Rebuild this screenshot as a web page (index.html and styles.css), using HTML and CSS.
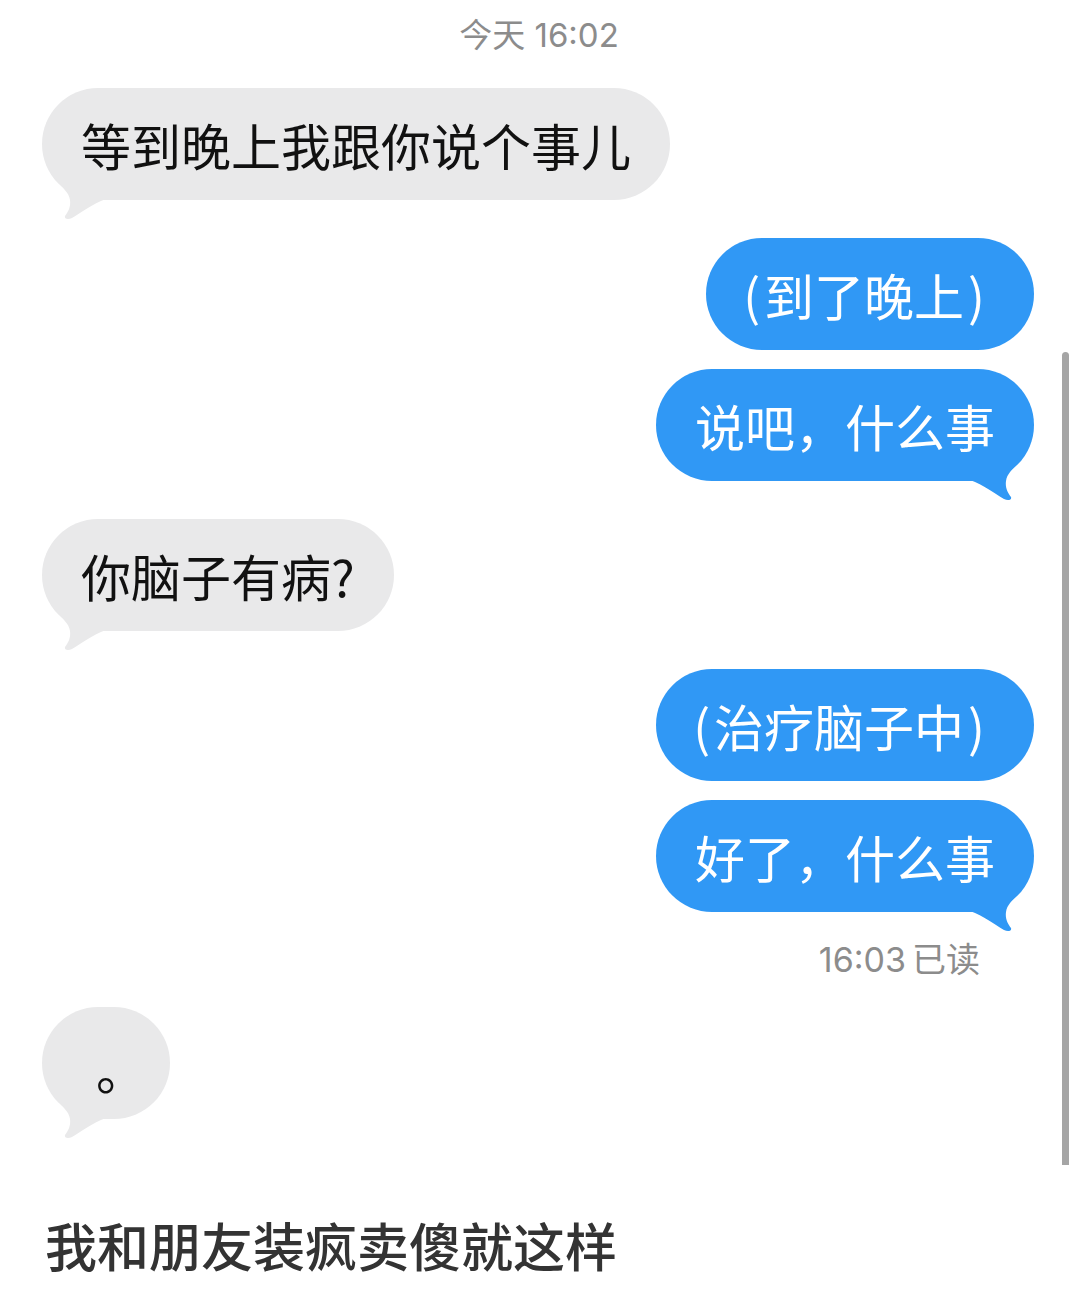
FILE: index.html
```html
<!DOCTYPE html>
<html lang="zh-CN">
<head>
    <meta charset="UTF-8">
    <meta name="viewport" content="width=device-width, initial-scale=1.0">
    <title>聊天记录</title>
    <link rel="stylesheet" href="styles.css">
</head>
<body>
    <div class="chat">
        <div class="time">今天 16:02</div>

        <div class="bubble them top">等到晚上我跟你说个事儿<svg class="tail" viewBox="0 0 70 60"><path d="M14 19 C20 28 27 32 28 40 C29 47 26 52 23 56 C22 59 26 60 30 58 C40 52 50 44 64 39 L64 19 Z"/></svg></div>

        <div class="bubble me first paren"><span class="p">(</span>到了晚上<span class="p">)</span></div>
        <div class="bubble me next">说吧，什么事<svg class="tail" viewBox="0 0 70 60"><path d="M14 19 C20 28 27 32 28 40 C29 47 26 52 23 56 C22 59 26 60 30 58 C40 52 50 44 64 39 L64 19 Z"/></svg></div>

        <div class="bubble them first">你脑子有病?<svg class="tail" viewBox="0 0 70 60"><path d="M14 19 C20 28 27 32 28 40 C29 47 26 52 23 56 C22 59 26 60 30 58 C40 52 50 44 64 39 L64 19 Z"/></svg></div>

        <div class="bubble me first paren"><span class="p">(</span>治疗脑子中<span class="p">)</span></div>
        <div class="bubble me next">好了，什么事<svg class="tail" viewBox="0 0 70 60"><path d="M14 19 C20 28 27 32 28 40 C29 47 26 52 23 56 C22 59 26 60 30 58 C40 52 50 44 64 39 L64 19 Z"/></svg></div>
        <div class="read">16:03<span class="read-label">已读</span></div>

        <div class="bubble them dot">。<svg class="tail" viewBox="0 0 70 60"><path d="M14 19 C20 28 27 32 28 40 C29 47 26 52 23 56 C22 59 26 60 30 58 C40 52 50 44 64 39 L64 19 Z"/></svg></div>
    </div>

    <p class="caption">我和朋友装疯卖傻就这样</p>

    <div class="scrollbar"></div>
</body>
</html>
```

FILE: styles.css
```css
body {
    margin: 0;
    background: #fff;
    font-family: "Noto Sans CJK SC", "Noto Sans", sans-serif;
    position: relative;
    min-height: 1289px;
}
.chat {
    display: flex;
    flex-direction: column;
    padding: 15px 45px 0 42px;
}
.time {
    align-self: center;
    font-family: Inter, "Noto Sans CJK SC", sans-serif;
    font-size: 33px;
    line-height: 40px;
    color: #8c8c8c;
    padding-left: 2px;
}
.bubble {
    position: relative;
    font-size: 50px;
    line-height: 50px;
    padding: 31px 39px;
    border-radius: 56px;
    white-space: nowrap;
}
.bubble.them {
    align-self: flex-start;
    background: #e9e9ea;
    color: #111;
}
.bubble.me {
    align-self: flex-end;
    background: #3098f5;
    color: #fff;
}
.bubble.top {
    margin-top: 33px;
}
.bubble.first {
    margin-top: 38px;
}
.bubble.next {
    margin-top: 19px;
}
.bubble.paren {
    padding-left: 33px;
    padding-right: 45px;
}
.bubble .p {
    padding: 0 4px;
}
.tail {
    position: absolute;
    bottom: -20px;
    left: 0;
    width: 70px;
    height: 60px;
}
.them .tail {
    fill: #e9e9ea;
}
.me .tail {
    left: auto;
    right: 0;
    fill: #3098f5;
    transform: scaleX(-1);
}
.read {
    align-self: flex-end;
    margin: 28px 54px 0 0;
    font-family: Inter, "Noto Sans CJK SC", sans-serif;
    font-size: 34px;
    line-height: 40px;
    color: #8c8c8c;
}
.read-label {
    margin-left: 6px;
}
.bubble.dot {
    margin-top: 27px;
    padding: 36px 24px 26px 54px;
}
.caption {
    margin: 96px 0 0 45px;
    font-size: 52px;
    line-height: 60px;
    font-weight: 500;
    color: #333;
}
.scrollbar {
    position: absolute;
    left: 1062px;
    top: 352px;
    width: 7px;
    height: 813px;
    background: #a5a5a5;
    border-radius: 4px 4px 0 0;
}
```
